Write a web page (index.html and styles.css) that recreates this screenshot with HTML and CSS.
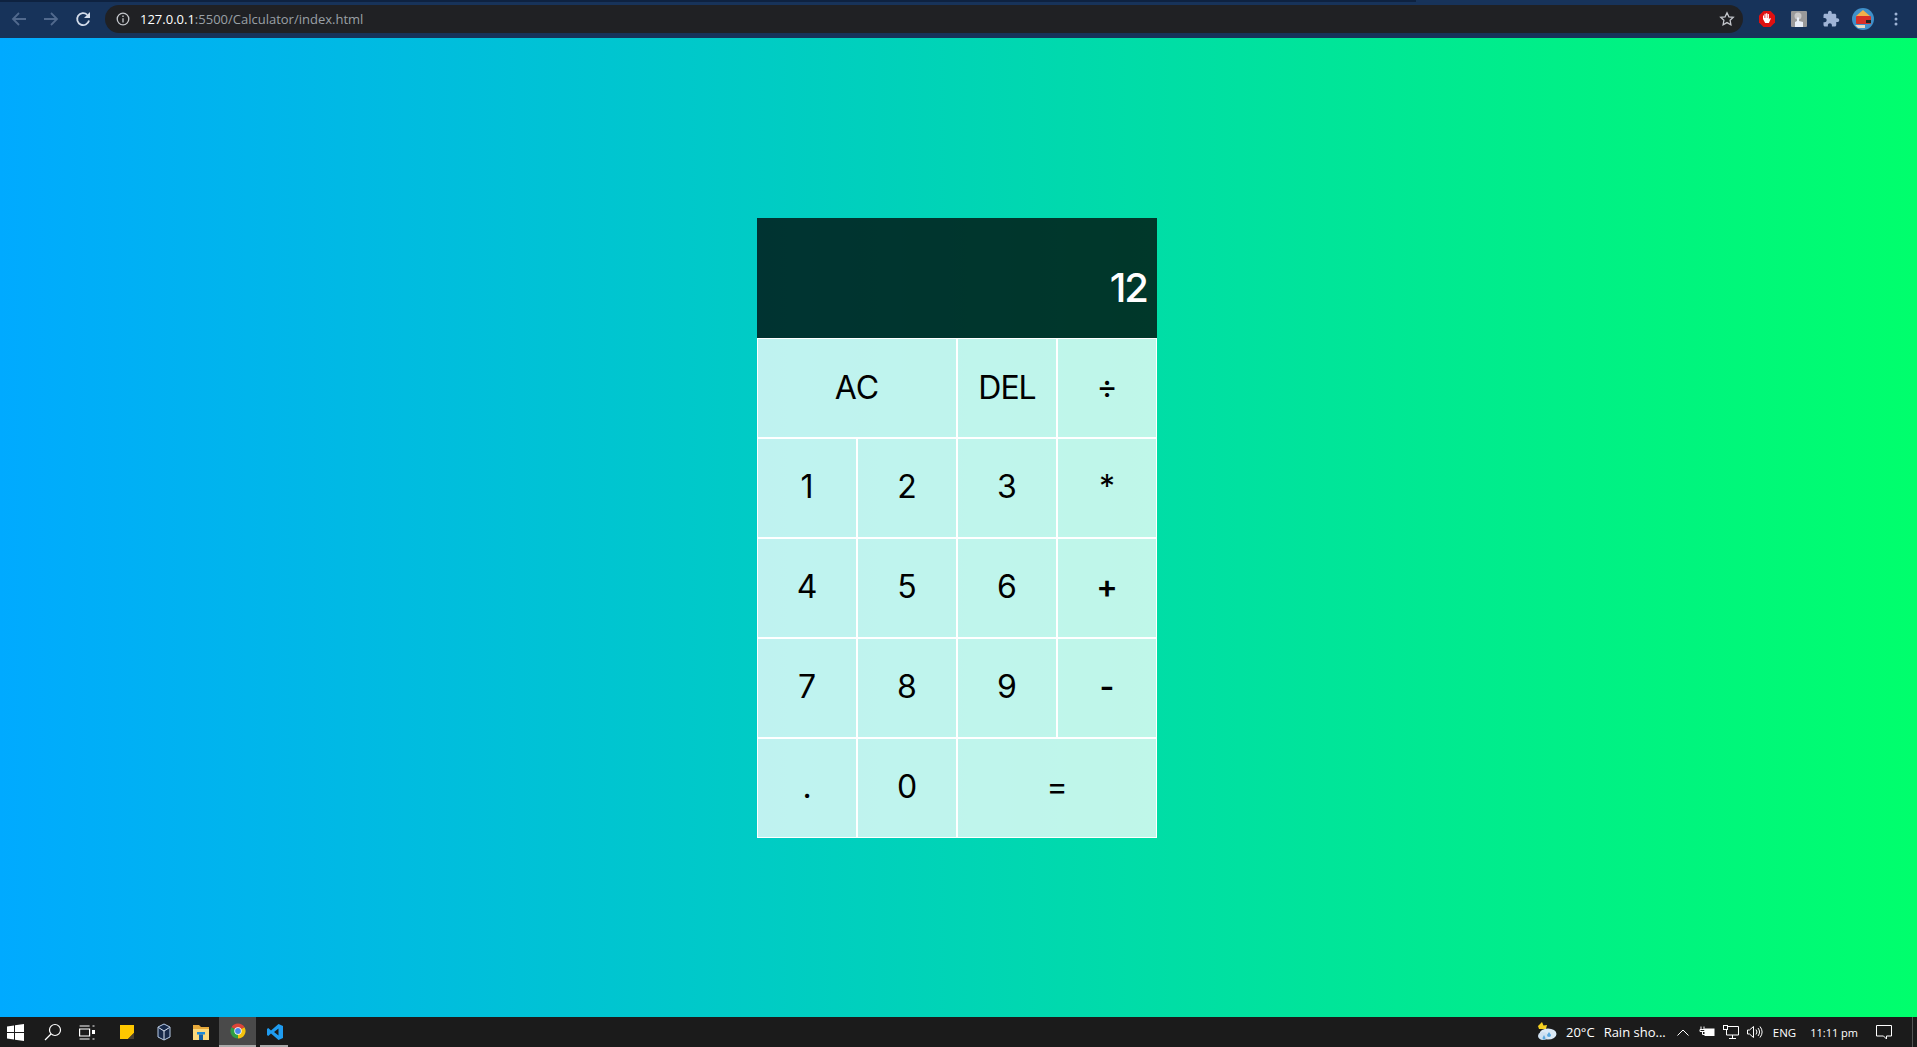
FILE: index.html
```html
<!DOCTYPE html>
<html>
<head>
    <title>Calculator</title>
    <link rel="stylesheet" href="styles.css">
</head>
<body>
    <!-- browser toolbar -->
    <header class="toolbar">
        <div class="nav-buttons">
            <svg class="nav-icon" viewBox="0 0 16 16"><path d="M15 8H2M8 2 2 8l6 6" class="dim"/></svg>
            <svg class="nav-icon" viewBox="0 0 16 16"><path d="M1 8h13M8 2l6 6-6 6" class="dim"/></svg>
            <svg class="nav-icon" viewBox="0 0 16 16"><path d="M14 9.500A6 6 0 1 1 12.300 3.800" class="bright"/><path d="M15 1V7H9z" class="fill"/></svg>
        </div>
        <div class="address">
            <svg class="info-icon" viewBox="0 0 14 14"><circle cx="7" cy="7" r="5.800"/><path d="M7 6.200v4.200M7 3.500v1.600"/></svg>
            <span class="url"><b>127.0.0.1</b>:5500/Calculator/index.html</span>
            <svg class="star-icon" viewBox="0 0 16 16"><path d="M8 1.800l1.900 4 4.400.5-3.200 3 .8 4.400L8 11.600l-3.900 2.100.8-4.400-3.200-3 4.400-.5z"/></svg>
        </div>
        <div class="extensions">
            <svg class="ext" viewBox="0 0 18 18"><path d="M5.500 1h7L17 5.500v7L12.500 17h-7L1 12.500v-7z" fill="#e01010"/><path d="M5 9V5.500h1V8h.5V3.800h1.200V8h.4V3.200h1.200V8h.4V4h1.200v5.500l1-1.500 1 .4-2 4.600H7.200z" fill="#fff"/></svg>
            <svg class="ext" viewBox="0 0 18 18"><rect x="1" y="1" width="16" height="16" rx="1" fill="#9a9a9a"/><circle cx="8" cy="6" r="3.500" fill="#c8c8c8"/><path d="M5 17v-5l2-1V7.500h2V11l4 1v5z" fill="#e8eef8"/></svg>
            <svg class="ext" viewBox="0 0 24 24"><path d="M20.500 11H19V7c0-1.100-.9-2-2-2h-4V3.500C13 2.120 11.880 1 10.500 1S8 2.120 8 3.500V5H4c-1.100 0-1.990.9-1.990 2v3.800H3.500c1.490 0 2.700 1.210 2.700 2.700s-1.210 2.700-2.700 2.700H2V20c0 1.100.9 2 2 2h3.800v-1.500c0-1.490 1.210-2.700 2.700-2.700s2.700 1.210 2.700 2.700V22H17c1.100 0 2-.9 2-2v-4h1.500c1.380 0 2.500-1.120 2.500-2.500S21.880 11 20.500 11z" fill="#9fb4d6"/></svg>
            <svg class="avatar" viewBox="0 0 22 22"><circle cx="11" cy="11" r="11" fill="#3f8fc8"/><path d="M3.500 8.500 11 2l7.500 6.500z" fill="#f2b04a"/><rect x="4" y="8" width="15" height="8" rx="1" fill="#d83028"/><rect x="14" y="12" width="5" height="3" fill="#222"/><path d="M3 17h10v3H6z" fill="#e8d8c0"/></svg>
            <svg class="menu-dots" viewBox="0 0 4 16"><circle cx="2" cy="3" r="1.500"/><circle cx="2" cy="8" r="1.500"/><circle cx="2" cy="13" r="1.500"/></svg>
        </div>
    </header>

    <main class="page">
        <div class="calculator">
            <div class="output">12</div>
            <button class="span-two word">AC</button>
            <button class="word del">DEL</button>
            <button>÷</button>
            <button>1</button>
            <button>2</button>
            <button>3</button>
            <button>*</button>
            <button>4</button>
            <button>5</button>
            <button>6</button>
            <button class="op">+</button>
            <button>7</button>
            <button>8</button>
            <button>9</button>
            <button class="op">-</button>
            <button>.</button>
            <button>0</button>
            <button class="span-two">=</button>
        </div>
    </main>

    <!-- windows taskbar -->
    <footer class="taskbar">
        <div class="task-apps">
            <span class="task-btn start"><svg width="17" height="17" viewBox="0 0 17 17"><path d="M0 2.500 7 1.500V8H0zM8 1.300 17 0v8H8zM0 9h7v6.500L0 14.500zM8 9h9v8l-9-1.300z" fill="#fff"/></svg></span>
            <span class="task-btn"><svg width="18" height="18" viewBox="0 0 18 18" fill="none" stroke="#fff" stroke-width="1.200"><circle cx="11" cy="7" r="5.500"/><path d="M7 11l-6 6"/></svg></span>
            <span class="task-btn task-view"><svg width="16" height="15" viewBox="0 0 16 15" fill="none" stroke="#fff" stroke-width="1.200"><path d="M.6 4h10v7H.6zM.6 1h10M.6 14h10"/><path d="M13.500 1h2M13.500 14h2"/><rect x="13" y="5" width="3" height="4" fill="#fff" stroke="none"/></svg></span>
            <span class="task-btn"><svg width="14" height="14" viewBox="0 0 14 14"><path d="M0 0h14v8l-6 6H0z" fill="#ffc800"/><path d="M14 8v6H8z" fill="#4a4030"/></svg></span>
            <span class="task-btn"><svg width="14" height="18" viewBox="0 0 14 18"><path d="M7 1l6 3v10l-6 3-6-3V4z" fill="#182a4a" stroke="#b8cce8"/><path d="M1.500 4.500 7 8l5.500-3.500M7 8v8.500" fill="none" stroke="#dfe8f5"/></svg></span>
            <span class="task-btn"><svg width="16" height="15" viewBox="0 0 16 15"><path d="M0 0h6l2 2h8v13H0z" fill="#e8a93a"/><rect x="0" y="4" width="16" height="11" fill="#fbd97c"/><rect x="4" y="7" width="8" height="2.500" fill="#1b8ad8"/><rect x="6" y="9.500" width="4" height="5.500" fill="#0f5ea8"/></svg></span>
            <span class="task-btn active"><svg width="16" height="16" viewBox="0 0 16 16"><path d="M8 8 1.500 4.250A7.500 7.500 0 0 1 14.500 4.250z" fill="#db4437"/><path d="M8 8 14.500 4.250A7.500 7.500 0 0 1 8 15.500z" fill="#f4c20d"/><path d="M8 8 8 15.500A7.500 7.500 0 0 1 1.500 4.250z" fill="#2f9e44"/><circle cx="8" cy="8" r="3.700" fill="#fff"/><circle cx="8" cy="8" r="2.900" fill="#4a86e8"/></svg></span>
            <span class="task-btn open"><svg width="16" height="16" viewBox="0 0 16 16"><path d="M11.500 0 16 2v12l-4.500 2L4 9.500 1.200 12 0 11V5l1.200-1L4 6.500zM11.500 4.500 7 8l4.500 3.500z" fill="#1f9cf0"/></svg></span>
        </div>
        <div class="tray">
            <svg class="tray-weather" width="22" height="22" viewBox="0 0 22 22"><path d="M7 1l1.500 3.500L12 4l-1 4H4L3 5 0 8z" fill="#f5d020"/><ellipse cx="13" cy="13" rx="8.500" ry="5.500" fill="#dbe9f6"/><ellipse cx="8" cy="15" rx="5" ry="4" fill="#cfe0f0"/><path d="M14 11l2 3a2 2 0 1 1-4 0zM9 14l1.500 3a1.500 1.500 0 1 1-3 0z" fill="#58a8e0"/></svg>
            <span class="temp">20°C</span>
            <span class="weather-text">Rain sho...</span>
            <svg class="tray-icon chevron" width="12" height="7" viewBox="0 0 12 7"><path d="M.5 6.500l5.500-5.500 5.500 5.500"/></svg>
            <svg class="tray-icon battery" width="16" height="12" viewBox="0 0 16 12"><path d="M2 .5v3M5 .5v3M1 3.500h5v2H1zM3.500 5.500v3H6"/><rect x="6" y="3" width="9" height="6.500" fill="#fff"/></svg>
            <svg class="tray-icon network" width="16" height="14" viewBox="0 0 16 14"><path d="M3.500 1.500h12v8.500h-12zM9.500 10v3M6 13.500h7"/><rect x=".5" y=".5" width="4" height="4" fill="#1b1b1b"/></svg>
            <svg class="tray-icon volume" width="16" height="14" viewBox="0 0 16 14"><path d="M.5 5h2l4-3.500v11L2.500 9h-2zM9 4.500a4 4 0 0 1 0 5M11 3a6.500 6.500 0 0 1 0 8M13 1.500a9 9 0 0 1 0 11"/></svg>
            <span class="lang">ENG</span>
            <span class="clock">11:11 pm</span>
            <svg class="tray-icon notify" width="16" height="15" viewBox="0 0 16 15"><path d="M.5.5h15v10.500H10.500v3l-3-3H.5z"/></svg>
            <span class="show-desktop"></span>
        </div>
    </footer>
</body>
</html>
```

FILE: styles.css
```css
* {
    box-sizing: border-box;
}

body {
    margin: 0;
    height: 100vh;
    display: flex;
    flex-direction: column;
    overflow: hidden;
    font-family: "Open Sans", sans-serif;
}

/* browser toolbar */
.toolbar {
    height: 38px;
    flex-shrink: 0;
    display: flex;
    align-items: center;
    background: linear-gradient(#0e2240, #0e2240) no-repeat 0 0 / 1416px 2px, #17335a;
    padding: 3px 0 3px 11px;
}

.nav-buttons {
    display: flex;
    gap: 16px;
}

.nav-icon {
    width: 16px;
    height: 16px;
}

.nav-icon path {
    fill: none;
    stroke-width: 1.8;
}

.nav-icon .dim {
    stroke: #51698d;
}

.nav-icon .bright {
    stroke: #d3dcea;
}

.nav-icon .fill {
    fill: #d3dcea;
    stroke: none;
}

.address {
    width: 1638px;
    height: 28px;
    margin-left: 14px;
    border-radius: 14px;
    background-color: #202124;
    display: flex;
    align-items: center;
    padding: 0 8px 0 11px;
}

.info-icon {
    width: 14px;
    height: 14px;
    fill: none;
    stroke: #c4c7cc;
    stroke-width: 1.3;
}

.url {
    margin-left: 10px;
    flex: 1;
    font-size: 13px;
    line-height: 18px;
    color: #9aa0a6;
    white-space: nowrap;
}

.url b {
    font-weight: 400;
    color: #fff;
}

.star-icon {
    width: 16px;
    height: 16px;
    fill: none;
    stroke: #c4c7cc;
    stroke-width: 1.3;
}

.extensions {
    display: flex;
    align-items: center;
    margin-left: 15px;
}

.ext {
    width: 18px;
    height: 18px;
    margin-right: 14px;
}

.avatar {
    width: 22px;
    height: 22px;
    margin-left: -2px;
    margin-right: 20px;
}

.menu-dots {
    width: 4px;
    height: 16px;
    fill: #9fb4d6;
}

/* calculator */
.page {
    flex: 1;
    display: flex;
    align-items: center;
    justify-content: center;
    padding-right: 3px;
    background: linear-gradient(to right, #00aaff, #00ff6c);
}

.calculator {
    display: grid;
    grid-template-columns: repeat(4, 100px);
    grid-template-rows: 120px repeat(5, 100px);
}

.calculator button {
    font-family: "Inter", sans-serif;
    font-size: 32px;
    color: #000;
    background-color: rgba(255, 255, 255, 0.75);
    border: 1px solid #fff;
    outline: none;
    padding: 0 0 2px;
    cursor: pointer;
}

.calculator .span-two {
    grid-column: span 2;
}

.calculator .word {
    padding: 0;
}

.calculator .del {
    letter-spacing: -1px;
}

.calculator .op {
    font-weight: 600;
}

.output {
    grid-column: 1 / -1;
    background-color: rgba(0, 0, 0, 0.75);
    display: flex;
    align-items: flex-end;
    justify-content: flex-end;
    padding: 10px 10px 26px;
    font-family: "Inter", sans-serif;
    font-size: 40px;
    font-weight: 500;
    letter-spacing: -2px;
    color: #fff;
}

/* windows taskbar */
.taskbar {
    height: 30px;
    flex-shrink: 0;
    display: flex;
    align-items: center;
    justify-content: space-between;
    background-color: #1b1b1b;
    color: #fff;
}

.task-apps {
    display: flex;
    height: 100%;
}

.task-btn {
    width: 37px;
    height: 100%;
    display: flex;
    align-items: center;
    justify-content: center;
}

.task-btn.start {
    width: 31px;
    margin-right: 3px;
}

.task-btn.task-view svg {
    margin-right: 5px;
}

.task-btn.active {
    background-color: #4a4a4a;
    border-bottom: 2px solid #aaa;
}

.task-btn.open {
    position: relative;
}

/* underline under an open app */
.task-btn.open::after {
    content: "";
    position: absolute;
    left: 4px;
    right: 5px;
    bottom: 0;
    height: 2px;
    background-color: #aaa;
}

.tray {
    display: flex;
    align-items: center;
    height: 100%;
    font-size: 13px;
    white-space: nowrap;
}

.tray-weather {
    margin-right: 9px;
}

.temp {
    margin-right: 9px;
}

.weather-text {
    margin-right: 11px;
}

.tray-icon {
    fill: none;
    stroke: #fff;
    stroke-width: 1;
}

.chevron {
    margin-right: 10px;
}

.battery {
    margin-right: 8px;
}

.network {
    margin-right: 8px;
}

.volume {
    margin-right: 10px;
}

.lang {
    font-size: 11.5px;
    margin-right: 14px;
}

.clock {
    font-size: 11px;
    margin-right: 18px;
}

.notify {
    margin-right: 20px;
}

.show-desktop {
    width: 1px;
    height: 100%;
    background-color: #555;
    margin-right: 4px;
}
```
